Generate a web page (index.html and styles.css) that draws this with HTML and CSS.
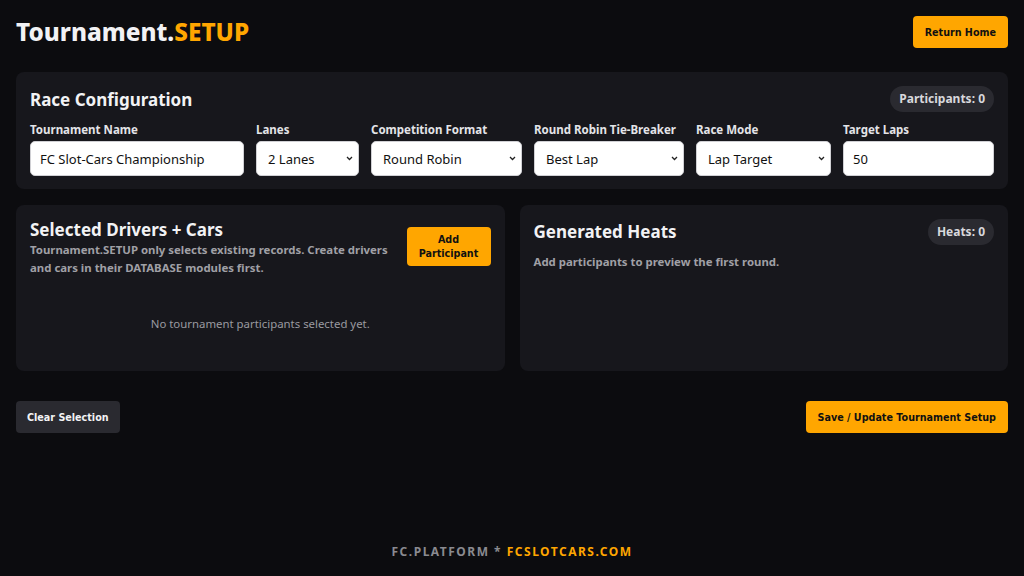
FILE: index.html
```html
<!DOCTYPE html>
<html lang="en">
<head>
<meta charset="utf-8">
<title>Tournament.SETUP</title>
<link rel="stylesheet" href="styles.css">
</head>
<body>
<div class="page">
  <header class="top">
    <h1 class="brand">Tournament.<span class="accent">SETUP</span></h1>
    <button class="btn btn-primary">Return Home</button>
  </header>

  <section class="card config">
    <div class="card-head">
      <h2 class="card-title">Race Configuration</h2>
      <span class="pill">Participants: 0</span>
    </div>
    <div class="fields">
      <label class="field">
        <span class="field-label">Tournament Name</span>
        <input class="control" type="text" value="FC Slot-Cars Championship">
      </label>
      <label class="field">
        <span class="field-label">Lanes</span>
        <select class="control select"><option>2 Lanes</option></select>
      </label>
      <label class="field">
        <span class="field-label">Competition Format</span>
        <select class="control select"><option>Round Robin</option></select>
      </label>
      <label class="field">
        <span class="field-label">Round Robin Tie-Breaker</span>
        <select class="control select"><option>Best Lap</option></select>
      </label>
      <label class="field">
        <span class="field-label">Race Mode</span>
        <select class="control select"><option>Lap Target</option></select>
      </label>
      <label class="field">
        <span class="field-label">Target Laps</span>
        <input class="control" type="text" value="50">
      </label>
    </div>
  </section>

  <div class="panels">
    <section class="card panel">
      <div class="panel-head">
        <div>
          <h2 class="card-title">Selected Drivers + Cars</h2>
          <p class="hint">Tournament.SETUP only selects existing records. Create drivers and cars in their DATABASE modules first.</p>
        </div>
        <button class="btn btn-primary btn-add">Add<br>Participant</button>
      </div>
      <p class="empty">No tournament participants selected yet.</p>
    </section>

    <section class="card panel">
      <div class="card-head heats-head">
        <h2 class="card-title">Generated Heats</h2>
        <span class="pill">Heats: 0</span>
      </div>
      <p class="hint">Add participants to preview the first round.</p>
    </section>
  </div>

  <div class="actions">
    <button class="btn btn-dark">Clear Selection</button>
    <button class="btn btn-primary">Save / Update Tournament Setup</button>
  </div>

  <footer class="foot">FC.PLATFORM * <span class="accent">FCSLOTCARS.COM</span></footer>
</div>
</body>
</html>
```

FILE: styles.css
```css
* { box-sizing: border-box; }

html, body {
  margin: 0;
  height: 100%;
}

body {
  background: #0c0c0f;
  color: #f2f2f4;
  font-family: "Noto Sans", "Open Sans", sans-serif;
}

.page {
  min-height: 576px;
  padding: 16px;
  display: flex;
  flex-direction: column;
}

.accent { color: #ffa600; }

.top {
  display: flex;
  justify-content: space-between;
  align-items: center;
  height: 32px;
  margin-bottom: 24px;
}

.brand {
  margin: 0;
  font-size: 24.3px;
  font-weight: 800;
  line-height: 32px;
}

.btn {
  border: none;
  border-radius: 4px;
  font-family: "DejaVu Sans", Verdana, sans-serif;
  font-weight: 700;
  font-size: 9.6px;
  padding: 0 12px;
  height: 32px;
  cursor: pointer;
}

.btn-primary {
  background: #ffa600;
  color: #111;
}

.btn-dark {
  background: #2a2a30;
  color: #f2f2f4;
  padding: 0 11px;
}

.card {
  background: #17171c;
  border-radius: 8px;
  padding: 14px;
}

.card-head {
  display: flex;
  justify-content: space-between;
  align-items: center;
}

.card-title {
  margin: 0;
  font-size: 17px;
  font-weight: 700;
  line-height: 22px;
}

.pill {
  background: #2a2a30;
  color: #d8d8dc;
  border-radius: 999px;
  font-size: 12px;
  font-weight: 700;
  padding: 4px 9px;
  line-height: 18px;
}

.config {
  margin-bottom: 16px;
  padding-bottom: 13px;
}

.config .card-title { padding-top: 2px; }

.fields {
  display: grid;
  grid-template-columns: 214fr 103fr 151fr 150fr 135fr 151fr;
  gap: 12px;
  margin-top: 10px;
}

.field {
  display: flex;
  flex-direction: column;
}

.field-label {
  font-size: 11.5px;
  font-weight: 700;
  color: #e4e4e8;
  line-height: 16px;
  margin-bottom: 3px;
}

.control {
  width: 100%;
  height: 35px;
  border: 1px solid #d0d0d4;
  border-radius: 5px;
  background-color: #fff;
  color: #111;
  font-family: inherit;
  font-size: 13px;
  padding: 0 9px;
}

/* native select with a small chevron at the right edge */
.select {
  appearance: none;
  -webkit-appearance: none;
  padding-left: 11px;
  background-image: url("data:image/svg+xml,%3Csvg xmlns='http://www.w3.org/2000/svg' width='7' height='5' viewBox='0 0 7 5'%3E%3Cpath d='M1 1l2.5 2.5L6 1' fill='none' stroke='%23222' stroke-width='1.3'/%3E%3C/svg%3E");
  background-repeat: no-repeat;
  background-position: right 5px center;
  background-size: 7px 5px;
}

.panels {
  display: grid;
  grid-template-columns: 1fr 1fr;
  gap: 15px;
  margin-bottom: 30px;
}

.panel { height: 166px; }

.panel-head {
  display: flex;
  justify-content: space-between;
  align-items: flex-start;
  gap: 16px;
}

.hint {
  margin: 0;
  font-size: 11.4px;
  font-weight: 700;
  color: #a0a0a6;
  line-height: 18px;
}

.btn-add {
  margin-top: 8px;
  height: 39px;
  width: 84px;
  flex: none;
  line-height: 14px;
  padding: 0 6px;
}

.empty {
  margin: 38px 0 0;
  text-align: center;
  font-size: 11.4px;
  line-height: 18px;
  color: #9a9aa0;
}

.heats-head { margin-bottom: 8px; }

.actions {
  display: flex;
  justify-content: space-between;
}

.foot {
  margin-top: auto;
  text-align: center;
  font-size: 12px;
  line-height: 16px;
  font-weight: 700;
  letter-spacing: 1.5px;
  color: #8a8a90;
}
```
